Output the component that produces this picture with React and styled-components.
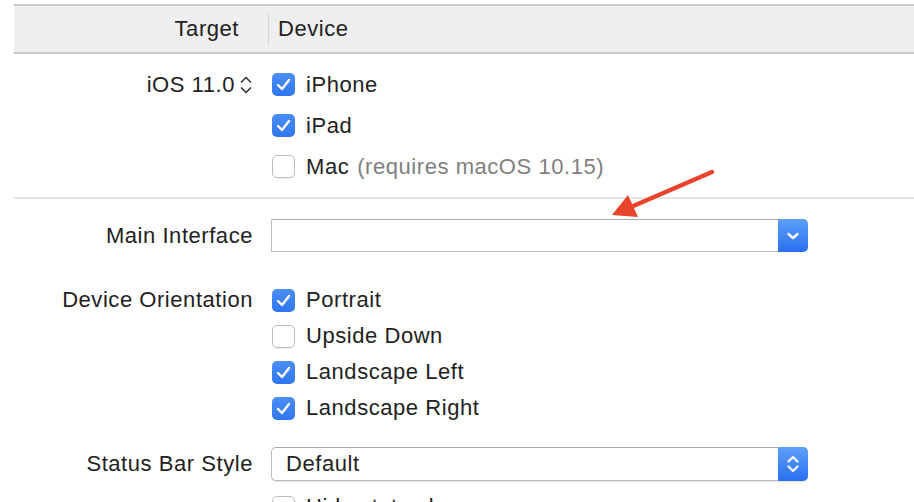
import React from "react";
import styled, { createGlobalStyle } from "styled-components";

const Global = createGlobalStyle`
  html, body { margin: 0; padding: 0; background: #ffffff; }
  body {
    font-family: "Liberation Sans", Arial, sans-serif;
    color: #222222;
    overflow: hidden;
  }
`;

const Page = styled.div`
  position: relative;
  width: 914px;
  height: 502px;
  overflow: hidden;
  padding: 4px 0 0 14px;
  box-sizing: border-box;
  font-size: 22px;
  letter-spacing: 0.55px;
`;

const Header = styled.div`
  display: flex;
  align-items: center;
  height: 46px;
  background: #efefef;
  border-top: 2px solid #c9c9c9;
  border-bottom: 2px solid #c9c9c9;
`;

const HeaderCell = styled.div`
  box-sizing: border-box;
  width: ${(p) => (p.$first ? "255px" : "auto")};
  text-align: ${(p) => (p.$first ? "right" : "left")};
  padding: ${(p) => (p.$first ? "0 29px 0 0" : "0 0 0 9px")};
  height: 32px;
  line-height: 32px;
  border-right: ${(p) => (p.$first ? "1px solid #d6d6d6" : "none")};
`;

const Section = styled.div`
  display: grid;
  grid-template-columns: 239px 1fr;
  column-gap: 18px;
  padding: ${(p) => p.$pad || "0"};
  border-bottom: ${(p) => (p.$sep ? "2px solid #e6e6e6" : "none")};
  align-items: start;
`;

const Label = styled.div`
  text-align: right;
  height: ${(p) => p.$h || 36}px;
  line-height: ${(p) => p.$h || 36}px;
  white-space: nowrap;
  display: flex;
  justify-content: flex-end;
  align-items: center;
  gap: 4px;
`;

const Controls = styled.div`
  display: flex;
  flex-direction: column;
  padding-right: 106px;
`;

const CheckRow = styled.label`
  display: flex;
  align-items: center;
  gap: 11px;
  height: ${(p) => p.$h || 36}px;
  padding-left: 1px;
  white-space: nowrap;
`;

const Box = styled.span`
  box-sizing: border-box;
  width: 23px;
  height: 23px;
  border-radius: 5px;
  flex: none;
  display: flex;
  align-items: center;
  justify-content: center;
  background: ${(p) =>
    p.$checked ? "linear-gradient(#4a8ff8, #2f76ee)" : "#ffffff"};
  border: ${(p) => (p.$checked ? "none" : "1px solid #bcbcbc")};
  box-shadow: ${(p) =>
    p.$checked ? "none" : "0 1px 1px rgba(0,0,0,0.06)"};
`;

const Hint = styled.span`
  color: #7f7f7f;
  margin-left: 8px;
`;

const Combo = styled.div`
  display: flex;
  box-sizing: border-box;
  border: 1px solid #bdbdbd;
  border-top-color: #a9a9a9;
  border-right: none;
  border-radius: ${(p) => (p.$round ? "5px" : "1px")} 5px 5px
    ${(p) => (p.$round ? "5px" : "1px")};
  background: #fff;
  box-shadow: ${(p) => (p.$round ? "0 1px 1px rgba(0,0,0,0.12)" : "none")};
  height: ${(p) => p.$h}px;
`;

const ComboText = styled.div`
  flex: 1;
  padding-left: 14px;
  display: flex;
  align-items: center;
`;

const BlueBtn = styled.div`
  width: 30px;
  margin: -1px 0 -1px 0;
  border-radius: 0 5px 5px 0;
  background: linear-gradient(#5ea0f9, #2a6ff0);
  display: flex;
  align-items: center;
  justify-content: center;
`;

const Arrow = styled.svg`
  position: absolute;
  left: 600px;
  top: 160px;
  pointer-events: none;
`;

const Check = () => (
  <svg width="17" height="15" viewBox="0 0 17 15">
    <path d="M3 8 L7 12 L14 3" fill="none" stroke="#fff" strokeWidth="2.4" strokeLinecap="round" strokeLinejoin="round" />
  </svg>
);

const CheckItem = ({ checked, children, h }) => (
  <CheckRow $h={h}>
    <Box $checked={checked}>{checked && <Check />}</Box>
    <span>{children}</span>
  </CheckRow>
);

const Stepper = () => (
  <svg width="14" height="22" viewBox="0 0 14 22">
    <path d="M2.5 8 L7 3.5 L11.5 8 M2.5 14 L7 18.5 L11.5 14" fill="none" stroke="#3a3a3a" strokeWidth="1.7" strokeLinecap="round" strokeLinejoin="round" />
  </svg>
);

export default function App() {
  return (
    <>
      <Global />
      <Page>
        <Header>
          <HeaderCell $first>Target</HeaderCell>
          <HeaderCell>Device</HeaderCell>
        </Header>

        <Section $pad="10px 0 10px 0" $sep>
          <Label $h={41}>
            iOS 11.0 <Stepper />
          </Label>
          <Controls>
            <CheckItem checked h={41}>iPhone</CheckItem>
            <CheckItem checked h={41}>iPad</CheckItem>
            <CheckItem h={41}>
              Mac<Hint>(requires macOS 10.15)</Hint>
            </CheckItem>
          </Controls>
        </Section>

        <Section $pad="20px 0 0 0">
          <Label $h={33}>Main Interface</Label>
          <Controls>
            <Combo $h={33}>
              <ComboText />
              <BlueBtn>
                <svg width="16" height="12" viewBox="0 0 16 12">
                  <path d="M3.5 4 L8 8 L12.5 4" fill="none" stroke="#fff" strokeWidth="2.4" strokeLinecap="round" strokeLinejoin="round" />
                </svg>
              </BlueBtn>
            </Combo>
          </Controls>
        </Section>

        <Section $pad="30px 0 0 0">
          <Label>Device Orientation</Label>
          <Controls>
            <CheckItem checked>Portrait</CheckItem>
            <CheckItem>Upside Down</CheckItem>
            <CheckItem checked>Landscape Left</CheckItem>
            <CheckItem checked>Landscape Right</CheckItem>
          </Controls>
        </Section>

        <Section $pad="21px 0 0 0">
          <Label $h={34}>Status Bar Style</Label>
          <Controls>
            <Combo $round $h={34}>
              <ComboText>Default</ComboText>
              <BlueBtn>
                <svg width="16" height="24" viewBox="0 0 16 24">
                  <path d="M3.5 9.5 L8 5 L12.5 9.5 M3.5 14.5 L8 19 L12.5 14.5" fill="none" stroke="#fff" strokeWidth="2.2" strokeLinecap="round" strokeLinejoin="round" />
                </svg>
              </BlueBtn>
            </Combo>
          </Controls>
        </Section>

        <Section $pad="8px 0 0 0">
          <Label />
          <Controls>
            <CheckItem>Hide status bar</CheckItem>
          </Controls>
        </Section>

        <Arrow width="120" height="70" viewBox="0 0 120 70">
          <path d="M112 12 L24 50" stroke="#e8432b" strokeWidth="4.5" strokeLinecap="round" />
          <path d="M12 55 L28 35 L38 57 Z" fill="#e8432b" />
        </Arrow>
      </Page>
    </>
  );
}
